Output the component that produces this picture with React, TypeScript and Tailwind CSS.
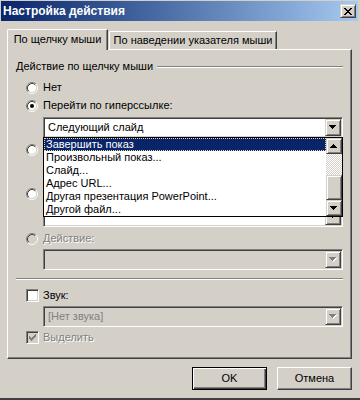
import React from "react";

const raised =
  "border border-t-[#d4d0c8] border-l-[#d4d0c8] border-r-[#404040] border-b-[#404040] shadow-[inset_1px_1px_0_#ffffff,inset_-1px_-1px_0_#808080]";
const sunken =
  "border border-t-[#808080] border-l-[#808080] border-r-white border-b-white shadow-[inset_1px_1px_0_#404040,inset_-1px_-1px_0_#d4d0c8]";
const disabledText = "text-[#808080] [text-shadow:1px_1px_0_#ffffff]";

const CHECK = [
  "......#",
  ".....##",
  "#...###",
  "##.###.",
  "#####..",
  ".###...",
  "..#....",
];

function Arrow({ up, disabled }: { up?: boolean; disabled?: boolean }) {
  const rows = [7, 5, 3, 1];
  const order = up ? [...rows].reverse() : rows;
  const draw = (fill: string, dx: number) =>
    order.map((w, i) => (
      <rect key={fill + i} x={(7 - w) / 2 + dx} y={i + dx} width={w} height={1} fill={fill} />
    ));
  return (
    <svg width="8" height="5" viewBox="0 0 8 5" shapeRendering="crispEdges">
      {disabled && draw("#ffffff", 1)}
      {draw(disabled ? "#808080" : "#000000", 0)}
    </svg>
  );
}

function Radio({ checked, disabled }: { checked?: boolean; disabled?: boolean }) {
  return (
    <svg width="12" height="12" viewBox="0 0 12 12" className="shrink-0">
      <circle cx="6" cy="6" r="4.5" fill={disabled ? "#d4d0c8" : "#ffffff"} />
      <path d="M2.11 9.89A5.5 5.5 0 0 1 9.89 2.11" fill="none" stroke="#808080" />
      <path d="M9.89 2.11A5.5 5.5 0 0 1 2.11 9.89" fill="none" stroke="#ffffff" />
      <path d="M2.82 9.18A4.5 4.5 0 0 1 9.18 2.82" fill="none" stroke="#404040" />
      <path d="M9.18 2.82A4.5 4.5 0 0 1 2.82 9.18" fill="none" stroke="#d4d0c8" />
      {checked && <circle cx="6" cy="6" r="2" fill="#000000" />}
    </svg>
  );
}

function Checkbox({ checked, disabled }: { checked?: boolean; disabled?: boolean }) {
  return (
    <div
      className={`relative h-[13px] w-[13px] shrink-0 ${sunken} ${disabled ? "bg-[#d4d0c8]" : "bg-white"}`}
    >
      {checked && (
        <svg width="7" height="7" viewBox="0 0 7 7" shapeRendering="crispEdges" className="absolute left-[2px] top-[2px]">
          {CHECK.flatMap((row, y) =>
            row.split("").map((c, x) =>
              c === "#" ? <rect key={`${x}-${y}`} x={x} y={y} width={1} height={1} fill={disabled ? "#808080" : "#000"} /> : null,
            ),
          )}
        </svg>
      )}
    </div>
  );
}

function Combo({ text, disabled, grayText }: { text?: string; disabled?: boolean; grayText?: boolean }) {
  return (
    <div className={`ml-[35px] flex h-[21px] w-[300px] p-px ${sunken} ${disabled ? "bg-[#d4d0c8]" : "bg-white"}`}>
      <div className={`flex flex-1 items-center pl-[3px] ${grayText ? "text-[#808080]" : "text-black"}`}>{text}</div>
      <div className={`flex h-full w-[16px] items-center justify-center ${raised} bg-[#d4d0c8]`}>
        <Arrow disabled={disabled} />
      </div>
    </div>
  );
}

function Row({ children, mt }: { children: React.ReactNode; mt: string }) {
  return <div className={`flex h-[13px] items-center gap-[5px] pl-[18px] ${mt}`}>{children}</div>;
}

const items = [
  "Завершить показ",
  "Произвольный показ...",
  "Слайд...",
  "Адрес URL...",
  "Другая презентация PowerPoint...",
  "Другой файл...",
];

export default function App() {
  return (
    <div className="relative flex h-[400px] w-[360px] flex-col overflow-hidden border-b-2 border-b-[#404040] bg-[#d4d0c8] pt-px font-['Liberation_Sans',Arial,sans-serif] text-[11px] leading-[13px] text-black">
      {/* Title bar */}
      <div className="ml-px mr-[2px] flex h-[20px] items-center justify-between bg-gradient-to-r from-[#0a246a] to-[#a6caf0] pl-[2px] pr-[2px]">
        <span className="text-[12px] font-bold text-white">Настройка действия</span>
        <div className={`flex h-[14px] w-[16px] items-center justify-center ${raised} bg-[#d4d0c8]`}>
          <svg width="8" height="7" viewBox="0 0 8 7" shapeRendering="crispEdges">
            <path d="M0 0h2v1H0zM6 0h2v1H6zM1 1h2v1H1zM5 1h2v1H5zM2 2h4v1H2zM3 3h2v1H3zM2 4h4v1H2zM1 5h2v1H1zM5 5h2v1H5zM0 6h2v1H0zM6 6h2v1H6z" fill="#000" />
          </svg>
        </div>
      </div>

      {/* Tabs */}
      <div className="mt-[8px] flex h-[20px] items-end pl-[7px]">
        <div className="relative z-10 mb-[-1px] flex h-[21px] w-[101px] items-center justify-center rounded-tl-[2px] border-l border-t border-r border-l-white border-t-white border-r-[#404040] bg-[#d4d0c8] pb-[2px] shadow-[inset_-1px_0_0_#808080]">
          По щелчку мыши
        </div>
        <div className="ml-px flex h-[18px] w-[168px] items-center justify-center rounded-tl-[2px] border-l border-t border-r border-l-white border-t-white border-r-[#404040] shadow-[inset_-1px_0_0_#808080]">
          По наведении указателя мыши
        </div>
      </div>

      {/* Panel */}
      <div className="relative ml-[7px] h-[310px] w-[345px] border border-t-white border-l-white border-r-[#404040] border-b-[#404040] shadow-[inset_-1px_-1px_0_#808080]">
        <div className="mt-[10px] flex h-[13px] items-center gap-[4px] pl-[8px] pr-[8px]">
          <span>Действие по щелчку мыши</span>
          <div className="h-[2px] flex-1 border-t border-b border-t-[#808080] border-b-white" />
        </div>

        <Row mt="mt-[8px]">
          <Radio />
          <span>Нет</span>
        </Row>
        <Row mt="mt-[5px]">
          <Radio checked />
          <span>Перейти по гиперссылке:</span>
        </Row>
        <div className="mt-[5px]">
          <Combo text="Следующий слайд" />
        </div>

        {/* covered by the open list: program radio + input */}
        <Row mt="mt-[5px]">
          <Radio />
        </Row>
        <div className="mt-[5px] flex gap-[6px]">
          <div className={`ml-[35px] h-[21px] w-[220px] bg-white ${sunken}`} />
          <div className={`h-[21px] w-[74px] ${raised}`} />
        </div>

        {/* covered by the open list: macro radio + combo */}
        <Row mt="mt-[5px]">
          <Radio />
        </Row>
        <div className="mt-[6px]">
          <Combo />
        </div>

        <Row mt="mt-[5px]">
          <Radio disabled />
          <span className={disabledText}>Действие:</span>
        </Row>
        <div className="mt-[4px]">
          <Combo disabled />
        </div>

        <div className="ml-[8px] mr-[8px] mt-[8px] h-[2px] border-t border-b border-t-[#808080] border-b-white" />

        <div className="mt-[9px] flex h-[13px] items-center gap-[4px] pl-[18px]">
          <Checkbox />
          <span>Звук:</span>
        </div>
        <div className="mt-[4px]">
          <Combo text="[Нет звука]" disabled grayText />
        </div>
        <div className="mt-[4px] flex h-[13px] items-center gap-[4px] pl-[18px]">
          <Checkbox checked disabled />
          <span className={disabledText}>Выделить</span>
        </div>

        {/* Open dropdown list */}
        <div className="absolute left-[35px] top-[87px] z-20 flex h-[80px] w-[300px] border border-black bg-white">
          <div className="flex flex-1 flex-col">
            {items.map((it, i) => (
              <div
                key={it}
                className={`flex h-[13px] items-center pl-[2px] ${
                  i === 0
                    ? "bg-[#0a246a] text-white outline-1 -outline-offset-1 outline-dotted outline-[#e8e0a0]"
                    : "text-black"
                }`}
              >
                {it}
              </div>
            ))}
          </div>
          <div className="flex w-[16px] flex-col">
            <div className={`flex h-[16px] items-center justify-center bg-[#d4d0c8] ${raised}`}>
              <Arrow up />
            </div>
            <div className="h-[21px] bg-[repeating-conic-gradient(#d4d0c8_0%_25%,#ffffff_0%_50%)] bg-size-[2px_2px]" />
            <div className={`h-[25px] bg-[#d4d0c8] ${raised}`} />
            <div className={`flex h-[16px] items-center justify-center bg-[#d4d0c8] ${raised}`}>
              <Arrow />
            </div>
          </div>
        </div>
      </div>

      {/* Buttons */}
      <div className="mt-[8px] flex justify-end gap-[10px] pr-[8px]">
        <div className="flex h-[23px] w-[75px] items-center justify-center border border-black bg-[#d4d0c8] shadow-[inset_1px_1px_0_#ffffff,inset_-1px_-1px_0_#404040,inset_-2px_-2px_0_#808080]">
          OK
        </div>
        <div className="flex h-[23px] w-[75px] items-center justify-center border border-t-white border-l-white border-r-[#404040] border-b-[#404040] bg-[#d4d0c8] shadow-[inset_-1px_-1px_0_#808080]">
          Отмена
        </div>
      </div>
    </div>
  );
}
